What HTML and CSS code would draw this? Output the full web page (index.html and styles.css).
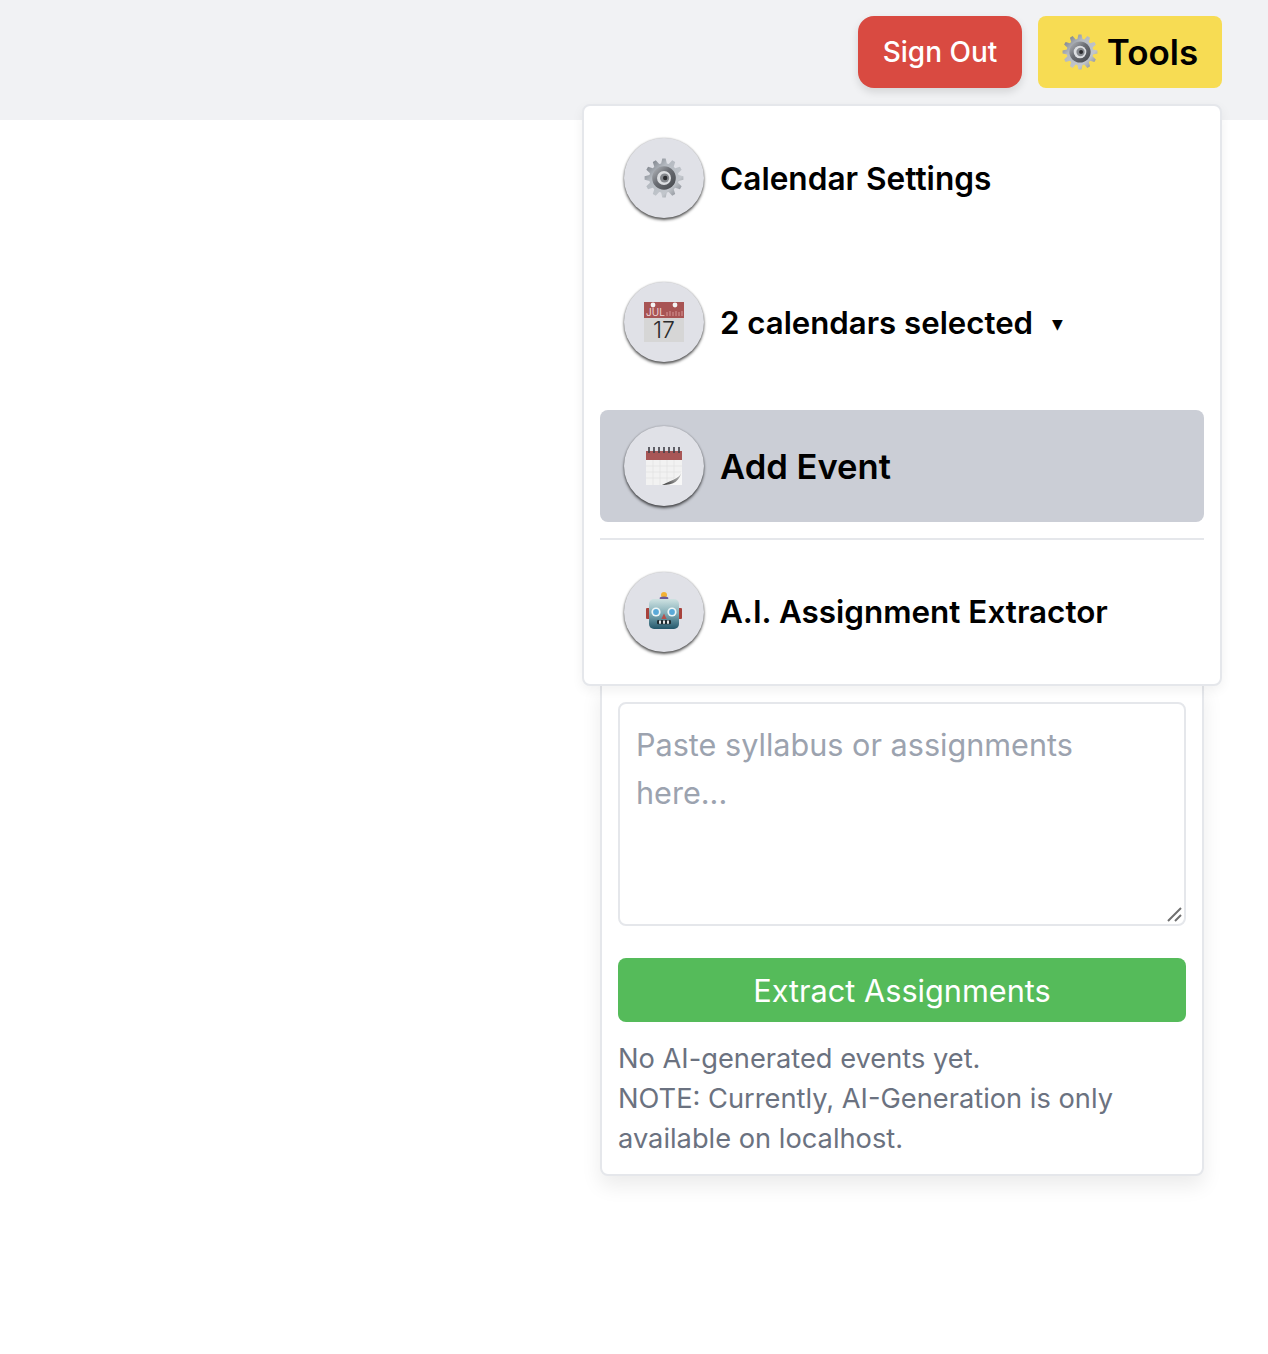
FILE: index.html
```html
<!DOCTYPE html>
<html lang="en">
<head>
<meta charset="utf-8">
<title>Tools</title>
<link rel="stylesheet" href="styles.css">
</head>
<body>
<svg class="defs" width="0" height="0" aria-hidden="true">
  <defs>
    <linearGradient id="tooth" x1="0" y1="0" x2="1" y2="1">
      <stop offset="0" stop-color="#5f646c"/><stop offset=".35" stop-color="#b4b9c0"/><stop offset=".7" stop-color="#c2c6cc"/><stop offset="1" stop-color="#6a6f77"/>
    </linearGradient>
    <linearGradient id="ring" x1="0" y1="0" x2="1" y2="1">
      <stop offset="0" stop-color="#b9bcc1"/><stop offset=".45" stop-color="#6a6d73"/><stop offset="1" stop-color="#44464b"/>
    </linearGradient>
    <linearGradient id="robot" x1="0" y1="0" x2="0" y2="1">
      <stop offset="0" stop-color="#cfe2e2"/><stop offset=".5" stop-color="#7fabb5"/><stop offset="1" stop-color="#23566a"/>
    </linearGradient>
    <linearGradient id="curl" x1="1" y1="0" x2="0" y2="1">
      <stop offset="0" stop-color="#cfcfcf"/><stop offset=".55" stop-color="#8c8c8c"/><stop offset="1" stop-color="#2e2e2e"/>
    </linearGradient>
    <clipPath id="teeth-clip">
      <path d="M17 6 18.3 .6h3.4L23 6Z"/>
      <path transform="rotate(30 20 20)" d="M17 6 18.3 .6h3.4L23 6Z"/>
      <path transform="rotate(60 20 20)" d="M17 6 18.3 .6h3.4L23 6Z"/>
      <path transform="rotate(90 20 20)" d="M17 6 18.3 .6h3.4L23 6Z"/>
      <path transform="rotate(120 20 20)" d="M17 6 18.3 .6h3.4L23 6Z"/>
      <path transform="rotate(150 20 20)" d="M17 6 18.3 .6h3.4L23 6Z"/>
      <path transform="rotate(180 20 20)" d="M17 6 18.3 .6h3.4L23 6Z"/>
      <path transform="rotate(210 20 20)" d="M17 6 18.3 .6h3.4L23 6Z"/>
      <path transform="rotate(240 20 20)" d="M17 6 18.3 .6h3.4L23 6Z"/>
      <path transform="rotate(270 20 20)" d="M17 6 18.3 .6h3.4L23 6Z"/>
      <path transform="rotate(300 20 20)" d="M17 6 18.3 .6h3.4L23 6Z"/>
      <path transform="rotate(330 20 20)" d="M17 6 18.3 .6h3.4L23 6Z"/>
      <circle cx="20" cy="20" r="14.8"/>
    </clipPath>
    <symbol id="gear" viewBox="0 0 40 40">
      <rect width="40" height="40" fill="url(#tooth)" clip-path="url(#teeth-clip)"/>
      <circle cx="20" cy="20" r="11.8" fill="url(#ring)"/>
      <circle cx="20" cy="20" r="7" fill="#dcdee1"/>
      <circle cx="20.6" cy="20" r="4.6" fill="#85888d"/>
      <circle cx="21.2" cy="20" r="2.2" fill="#2b2c2f"/>
    </symbol>
  </defs>
</svg>

<header class="topbar">
  <button class="btn btn-signout" type="button">Sign Out</button>
  <div class="tools">
    <button class="btn btn-tools" type="button">
      <svg class="gear-small"><use href="#gear"/></svg>
      <span>Tools</span>
    </button>
    <div class="dropdown">
      <nav class="menu">
        <a class="item">
          <span class="disc"><svg class="glyph" viewBox="0 0 40 40"><use href="#gear"/></svg></span>
          <span class="label">Calendar Settings</span>
        </a>
        <a class="item">
          <span class="disc">
            <svg class="glyph" viewBox="0 0 40 40">
              <rect width="40" height="40" fill="#d6d6d6"/>
              <rect width="40" height="16" fill="#a85454"/>
              <circle cx="9" cy="3" r="2.4" fill="#f4f4f4"/>
              <circle cx="31" cy="3" r="2.4" fill="#f4f4f4"/>
              <text class="cal-month" x="2" y="13.5">JUL</text>
              <path class="cal-rows" d="M23 14v-4M26 14v-5M29 14v-4M32 14v-5M35 14v-4M38 14v-5"/>
              <text class="cal-day" x="20" y="36">17</text>
            </svg>
          </span>
          <span class="label label-cal">2 calendars selected</span>
          <span class="caret">▼</span>
        </a>
        <a class="item item-active">
          <span class="disc">
            <svg class="glyph" viewBox="0 0 40 40">
              <rect x="2" y="7" width="36" height="32" fill="#f2f2f2"/>
              <rect x="2" y="5" width="36" height="9" fill="#a85656"/>
              <path class="pad-rings" d="M5 1v6M10 1v6M15 1v6M20 1v6M25 1v6M30 1v6M35 1v6"/>
              <path class="pad-grid" d="M2 20h36M2 26h36M2 32h36M9 14v25M16 14v25M23 14v25M30 14v25"/>
              <path d="M38 24C36 30 28 34 18 39H38Z" fill="#f7f7f7"/>
              <path d="M38 24C37 32 30 33 18 39 30 39 36 35 38 24Z" fill="url(#curl)"/>
            </svg>
          </span>
          <span class="label label-big">Add Event</span>
        </a>
        <hr class="rule">
        <a class="item">
          <span class="disc">
            <svg class="glyph" viewBox="0 0 40 40">
              <circle cx="20" cy="3" r="3" fill="#f2b134"/>
              <ellipse cx="20" cy="6.3" rx="4.4" ry="1.7" fill="#6a5a9a"/>
              <rect x="2" y="16" width="4" height="11" rx="1" fill="#a8423c"/>
              <rect x="34" y="16" width="4" height="11" rx="1" fill="#a8423c"/>
              <rect x="5" y="7" width="30" height="30" rx="5" fill="url(#robot)"/>
              <circle cx="12" cy="20" r="4.6" fill="#eef7f8"/><circle cx="12" cy="20" r="2.9" fill="#5aa9d8"/>
              <circle cx="28" cy="20" r="4.6" fill="#eef7f8"/><circle cx="28" cy="20" r="2.9" fill="#5aa9d8"/>
              <path d="M20 21.5l2.6 5.5h-5.2z" fill="#b8504a"/>
              <rect x="13" y="28" width="14" height="4.2" rx="1.2" fill="#1f2b30"/>
              <path class="teeth" d="M16 28.5v3.2M20 28.5v3.2M24 28.5v3.2"/>
            </svg>
          </span>
          <span class="label label-ai">A.I. Assignment Extractor</span>
        </a>
      </nav>
      <section class="panel">
        <div class="paste-wrap">
          <textarea class="paste" placeholder="Paste syllabus or assignments here..."></textarea>
          <svg class="grip" width="18" height="18" viewBox="0 0 18 18"><path d="M3 16 16 3M10 16l6-6"/></svg>
        </div>
        <button class="extract" type="button">Extract Assignments</button>
        <p class="note">No AI-generated events yet.<br>NOTE: Currently, AI-Generation is only available on localhost.</p>
      </section>
    </div>
  </div>
</header>
</body>
</html>
```
FILE: styles.css
```css
* { box-sizing: border-box; }
html, body { margin: 0; background: #fff; }
body { font-family: Inter, "Liberation Sans", sans-serif; min-height: 1354px; }
.defs { position: absolute; }

.topbar {
  height: 120px;
  background: #f1f2f4;
  display: flex;
  justify-content: flex-end;
  align-items: flex-start;
  gap: 16px;
  padding: 16px 46px 0 0;
}
.btn {
  height: 72px;
  border: 0;
  font-family: inherit;
  display: flex;
  align-items: center;
  justify-content: center;
}
.btn-signout {
  width: 164px;
  background: #d94a41;
  color: #fff;
  font-size: 28px;
  font-weight: 500;
  border-radius: 16px;
  box-shadow: 0 4px 8px rgba(0,0,0,.12);
}
.tools { position: relative; }
.btn-tools {
  width: 184px;
  background: #f7dc53;
  color: #000;
  font-size: 35px;
  font-weight: 600;
  border-radius: 8px;
  gap: 9px;
  padding-left: 6px;
}
.gear-small { width: 36px; height: 36px; }

.dropdown {
  position: absolute;
  top: 88px;
  right: 0;
  width: 640px;
}
.menu {
  position: relative;
  z-index: 2;
  background: #fff;
  border: 2px solid #e5e7eb;
  border-radius: 8px;
  padding: 16px;
  box-shadow: 0 4px 12px rgba(0,0,0,.06);
  display: flex;
  flex-direction: column;
  gap: 32px;
}
.item {
  display: flex;
  align-items: center;
  height: 112px;
  padding: 0 24px;
  border-radius: 8px;
  color: #000;
}
.item-active { background: #cbced6; }
.disc {
  width: 80px;
  height: 80px;
  flex: none;
  border-radius: 50%;
  background: #e0e1e7;
  display: flex;
  align-items: center;
  justify-content: center;
  box-shadow: 0 2px 3px 0 rgba(0,0,0,.65), 0 0 2px rgba(0,0,0,.25);
}
.glyph { width: 40px; height: 40px; overflow: visible; }
.label { margin-left: 16px; font-size: 31.6px; font-weight: 600; }
.label-cal { font-size: 31.2px; margin-top: 2px; }
.label-ai { font-size: 31.45px; }
.label-big { font-size: 34.6px; }
.caret { margin-left: 19px; margin-top: 4px; font-size: 14px; font-family: "DejaVu Sans", sans-serif; }
.rule { height: 2px; border: 0; margin: -16px 0; background: #e5e7eb; }

.cal-month { font-size: 10px; fill: #f0d8d8; font-family: Inter, sans-serif; }
.cal-day { font-size: 23px; font-weight: 300; fill: #2b2b2b; text-anchor: middle; font-family: Inter, sans-serif; }
.cal-rows { stroke: #c98484; stroke-width: 1.4; fill: none; }
.pad-rings { stroke: #3f3f46; stroke-width: 1.6; fill: none; }
.pad-grid { stroke: #e2e2e2; stroke-width: .7; fill: none; }
.teeth { stroke: #e5e7e8; stroke-width: 2; fill: none; }

.panel {
  margin: -2px 18px 0;
  background: #fff;
  border: 2px solid #e5e7eb;
  border-radius: 0 0 8px 8px;
  padding: 16px 16px 15px;
  box-shadow: 0 10px 20px rgba(0,0,0,.08);
}
.paste-wrap { position: relative; margin-bottom: 32px; }
.paste {
  display: block;
  width: 100%;
  height: 224px;
  border: 2px solid #e5e7eb;
  border-radius: 8px;
  padding: 17px 16px 16px;
  font: 400 30.6px/48px Inter, sans-serif;
  outline: 0;
  resize: none;
}
.paste::placeholder { color: #9ca3af; opacity: 1; }
.grip {
  position: absolute;
  right: 3px;
  bottom: 3px;
  pointer-events: none;
  fill: none;
  stroke: #6f6f6f;
  stroke-width: 2;
}
.extract {
  display: block;
  width: 100%;
  height: 64px;
  border: 0;
  border-radius: 8px;
  padding-top: 2px;
  background: #55bb5a;
  color: #fff;
  font: 400 30.7px Inter, sans-serif;
}
.note {
  margin: 17px 0 0;
  color: #6b7280;
  font-size: 27.25px;
  line-height: 40px;
}
```
